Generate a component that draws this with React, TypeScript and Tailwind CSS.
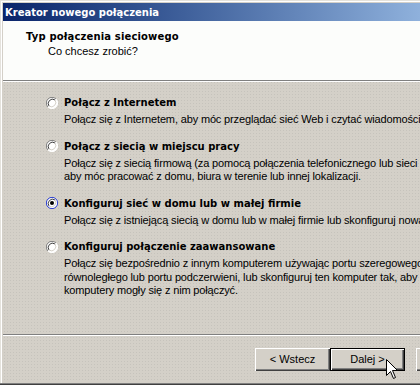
import React from 'react';

type Option = {
    title: string;
    lines: string[];
    checked?: boolean;
};

const options: Option[] = [
    {
        title: 'Połącz z Internetem',
        lines: ['Połącz się z Internetem, aby móc przeglądać sieć Web i czytać wiadomości e-mail.'],
    },
    {
        title: 'Połącz z siecią w miejscu pracy',
        lines: [
            'Połącz się z siecią firmową (za pomocą połączenia telefonicznego lub sieci VPN),',
            'aby móc pracować z domu, biura w terenie lub innej lokalizacji.',
        ],
    },
    {
        title: 'Konfiguruj sieć w domu lub w małej firmie',
        lines: ['Połącz się z istniejącą siecią w domu lub w małej firmie lub skonfiguruj nową.'],
        checked: true,
    },
    {
        title: 'Konfiguruj połączenie zaawansowane',
        lines: [
            'Połącz się bezpośrednio z innym komputerem używając portu szeregowego,',
            'równoległego lub portu podczerwieni, lub skonfiguruj ten komputer tak, aby inne',
            'komputery mogły się z nim połączyć.',
        ],
    },
];

// bold captions in the wizard are wider than Arial bold
const boldFont = { fontFamily: '"DejaVu Sans", Verdana, sans-serif' };

const Radio: React.FC<{ checked?: boolean }> = ({ checked }) => (
    <svg width="12" height="12" viewBox="0 0 12 12" className="shrink-0">
        {/* win2k sunken radio */}
        <circle cx="6" cy="6" r="5.5" fill="#ffffff" />
        <path d="M10 2 A5.5 5.5 0 0 0 2 10" fill="none" stroke={checked ? '#2b3fd0' : '#808080'} strokeWidth="1" />
        <path d="M2 10 A5.5 5.5 0 0 0 10 2" fill="none" stroke={checked ? '#2b3fd0' : '#ffffff'} strokeWidth="1" />
        <path d="M9 3 A4.3 4.3 0 0 0 3 9" fill="none" stroke="#404040" strokeWidth="1" />
        <path d="M3 9 A4.3 4.3 0 0 0 9 3" fill="none" stroke="#d4d0c8" strokeWidth="1" />
        {checked && <circle cx="6" cy="6" r="2" fill="#000000" />}
    </svg>
);

const Win2kButton: React.FC<{ label: string; isDefault?: boolean }> = ({ label, isDefault }) => (
    <div
        className={`w-[75px] h-[23px] shrink-0 flex items-center justify-center text-[11px] text-black bg-[#d4d0c8] ${
            isDefault
                ? 'border border-black shadow-[inset_1px_1px_0_#ffffff,inset_-1px_-1px_0_#404040,inset_-2px_-2px_0_#808080]'
                : 'shadow-[inset_1px_1px_0_#ffffff,inset_-1px_-1px_0_#404040,inset_-2px_-2px_0_#808080]'
        }`}
    >
        {label}
    </div>
);

export default function App() {
    return (
        <div
            className="relative w-[420px] h-[385px] overflow-hidden bg-[#d4d0c8] pt-[3px] pl-[3px] shadow-[inset_1px_1px_0_#e4e2dc,inset_2px_2px_0_#ffffff]"
            style={{ fontFamily: '"Liberation Sans", Arial, sans-serif' }}
        >
            <div className="flex flex-col w-full">
                {/* title bar */}
                <div className="h-[18px] flex items-center pl-[2px] bg-linear-to-r from-[#0a246a] to-[#8fb1dc]">
                    <span className="text-white font-bold text-[10px] leading-[13px] whitespace-nowrap" style={boldFont}>
                        Kreator nowego połączenia
                    </span>
                </div>

                {/* header */}
                <div className="h-[60px] bg-[#fcfdfb] pt-[9px] pl-[23px] border-b border-[#808080] shadow-[0_1px_0_#ffffff]">
                    <div className="font-bold text-[10px] leading-[13px] text-black tracking-[0.15px]" style={boldFont}>
                        Typ połączenia sieciowego
                    </div>
                    <div className="mt-[2px] pl-[22px] text-[11px] leading-[13px] text-black">Co chcesz zrobić?</div>
                </div>

                {/* options */}
                <div className="h-[254px] pt-[15px] pl-[43px] flex flex-col gap-[13px] border-b border-[#808080] bg-[radial-gradient(circle,#c6c3bc_0.5px,transparent_0.9px)] bg-[length:3px_3px]">
                    {options.map((opt) => (
                        <div key={opt.title} className="flex flex-col gap-[4px]">
                            <div className="flex items-center gap-[6px] h-[13px]">
                                <Radio checked={opt.checked} />
                                <span
                                    className="font-bold text-[10px] leading-[13px] text-black whitespace-nowrap"
                                    style={boldFont}
                                >
                                    {opt.title}
                                </span>
                            </div>
                            <div className="pl-[18px] text-[11px] leading-[13.5px] text-black whitespace-nowrap tracking-[-0.15px]">
                                {opt.lines.map((l) => (
                                    <div key={l}>{l}</div>
                                ))}
                            </div>
                        </div>
                    ))}
                </div>

                {/* buttons */}
                <div className="h-[47px] border-t border-white pt-[12px] pl-[252px] flex bg-[radial-gradient(circle,#c6c3bc_0.5px,transparent_0.9px)] bg-[length:3px_3px]">
                    <Win2kButton label="< Wstecz" />
                    <Win2kButton label="Dalej >" isDefault />
                    <div className="ml-[11px]">
                        <Win2kButton label="Anuluj" />
                    </div>
                </div>
            </div>

            {/* bottom frame */}
            <div className="absolute left-0 right-0 bottom-0 h-[2px] border-t border-[#808080] bg-[#404040]" />

            {/* mouse cursor */}
            <svg className="absolute left-[386px] top-[359px]" width="13" height="21" viewBox="0 0 13 21">
                <path
                    d="M0.5 0.5 L0.5 16.5 L4.5 12.5 L7.5 19.5 L9.5 18.5 L6.5 11.5 L11.5 11.5 Z"
                    fill="#ffffff"
                    stroke="#000000"
                    strokeWidth="1"
                />
            </svg>
        </div>
    );
}
